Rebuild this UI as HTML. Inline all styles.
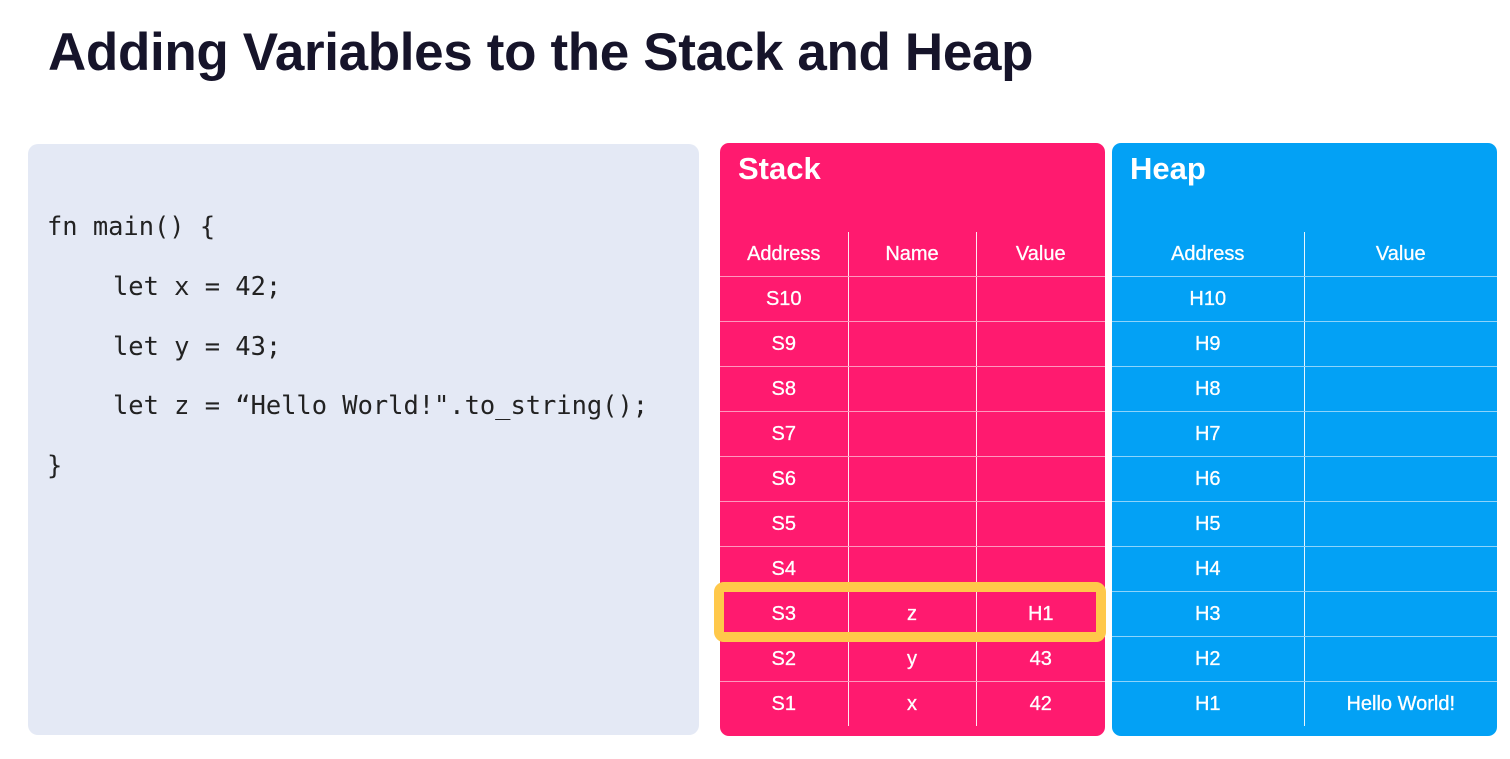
<!DOCTYPE html>
<html><head><meta charset="utf-8"><style>
body{margin:0;width:1510px;height:759px;background:#fff;position:relative;overflow:hidden;font-family:"Liberation Sans",sans-serif}
h1{position:absolute;left:48px;top:22px;margin:0;font-size:53px;font-weight:bold;color:#16142a;letter-spacing:-0.35px;white-space:nowrap}
.code{position:absolute;left:28px;top:144px;width:671px;height:591px;background:#e4e9f5;border-radius:10px}
.code div{position:absolute;left:19px;font-family:"DejaVu Sans Mono","Liberation Mono",monospace;font-size:25.4px;color:#222;white-space:pre;line-height:30px}
.panel{position:absolute;top:143px;height:593px;border-radius:9px;color:#fff}
.panel .t{position:absolute;left:18px;top:8px;font-size:31px;font-weight:bold}
table{position:absolute;top:232px;left:0;border-collapse:collapse;table-layout:fixed}
td,th{height:44px;padding:0;text-align:center;font-size:20px;font-weight:normal;color:#fff;border-left:1.5px solid rgba(255,255,255,.9);border-bottom:1.5px solid rgba(255,255,255,.55);-webkit-text-stroke:0.3px #fff}
td:first-child,th:first-child{border-left:none}
tr:last-child td{border-bottom:none}
.hl{position:absolute;left:714px;top:582px;width:372px;height:40px;border:10px solid #ffc84a;border-radius:10px}
</style></head><body>
<h1>Adding Variables to the Stack and Heap</h1>
<div class="code">
<div style="top:67px">fn main() {</div>
<div style="top:127px;left:85px">let x = 42;</div>
<div style="top:187px;left:85px">let y = 43;</div>
<div style="top:246px;left:85px">let z = “Hello World!".to_string();</div>
<div style="top:306px">}</div>
</div>
<div class="panel" style="left:720px;width:385px;background:#ff1a6f">
<div class="t">Stack</div>
<table style="top:89px;width:385px">
<colgroup><col style="width:128px"><col style="width:128px"><col style="width:129px"></colgroup>
<tr><th>Address</th><th>Name</th><th>Value</th></tr>
<tr><td>S10</td><td></td><td></td></tr>
<tr><td>S9</td><td></td><td></td></tr>
<tr><td>S8</td><td></td><td></td></tr>
<tr><td>S7</td><td></td><td></td></tr>
<tr><td>S6</td><td></td><td></td></tr>
<tr><td>S5</td><td></td><td></td></tr>
<tr><td>S4</td><td></td><td></td></tr>
<tr><td>S3</td><td>z</td><td>H1</td></tr>
<tr><td>S2</td><td>y</td><td>43</td></tr>
<tr><td>S1</td><td>x</td><td>42</td></tr>
</table>
</div>
<div class="panel" style="left:1112px;width:385px;background:#03a1f5">
<div class="t">Heap</div>
<table style="top:89px;width:385px">
<colgroup><col style="width:192px"><col style="width:193px"></colgroup>
<tr><th>Address</th><th>Value</th></tr>
<tr><td>H10</td><td></td></tr>
<tr><td>H9</td><td></td></tr>
<tr><td>H8</td><td></td></tr>
<tr><td>H7</td><td></td></tr>
<tr><td>H6</td><td></td></tr>
<tr><td>H5</td><td></td></tr>
<tr><td>H4</td><td></td></tr>
<tr><td>H3</td><td></td></tr>
<tr><td>H2</td><td></td></tr>
<tr><td>H1</td><td>Hello World!</td></tr>
</table>
</div>
<div class="hl"></div>
</body></html>
